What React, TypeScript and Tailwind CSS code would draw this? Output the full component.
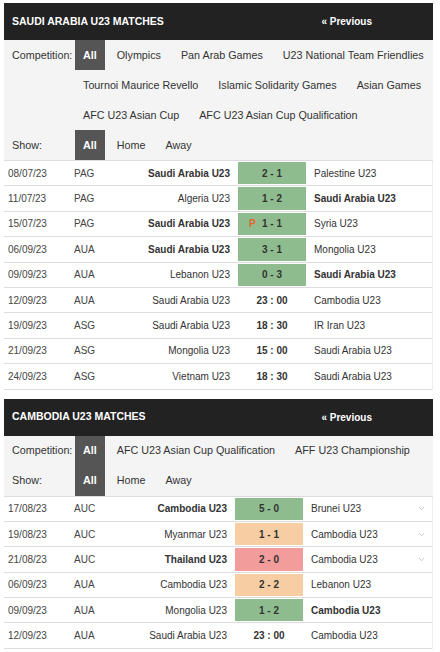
import React from 'react';
import { ChevronDown } from 'lucide-react';

type Match = {
  date: string;
  comp: string;
  home: string;
  away: string;
  score: string;
  win?: 'home' | 'away';
  tone?: 'green' | 'orange' | 'red' | 'none';
  pen?: boolean;
};

const saudiMatches: Match[] = [
  { date: '08/07/23', comp: 'PAG', home: 'Saudi Arabia U23', away: 'Palestine U23', score: '2 - 1', win: 'home', tone: 'green' },
  { date: '11/07/23', comp: 'PAG', home: 'Algeria U23', away: 'Saudi Arabia U23', score: '1 - 2', win: 'away', tone: 'green' },
  { date: '15/07/23', comp: 'PAG', home: 'Saudi Arabia U23', away: 'Syria U23', score: '1 - 1', win: 'home', tone: 'green', pen: true },
  { date: '06/09/23', comp: 'AUA', home: 'Saudi Arabia U23', away: 'Mongolia U23', score: '3 - 1', win: 'home', tone: 'green' },
  { date: '09/09/23', comp: 'AUA', home: 'Lebanon U23', away: 'Saudi Arabia U23', score: '0 - 3', win: 'away', tone: 'green' },
  { date: '12/09/23', comp: 'AUA', home: 'Saudi Arabia U23', away: 'Cambodia U23', score: '23 : 00', tone: 'none' },
  { date: '19/09/23', comp: 'ASG', home: 'Saudi Arabia U23', away: 'IR Iran U23', score: '18 : 30', tone: 'none' },
  { date: '21/09/23', comp: 'ASG', home: 'Mongolia U23', away: 'Saudi Arabia U23', score: '15 : 00', tone: 'none' },
  { date: '24/09/23', comp: 'ASG', home: 'Vietnam U23', away: 'Saudi Arabia U23', score: '18 : 30', tone: 'none' },
];

const cambodiaMatches: Match[] = [
  { date: '17/08/23', comp: 'AUC', home: 'Cambodia U23', away: 'Brunei U23', score: '5 - 0', win: 'home', tone: 'green' },
  { date: '19/08/23', comp: 'AUC', home: 'Myanmar U23', away: 'Cambodia U23', score: '1 - 1', tone: 'orange' },
  { date: '21/08/23', comp: 'AUC', home: 'Thailand U23', away: 'Cambodia U23', score: '2 - 0', win: 'home', tone: 'red' },
  { date: '06/09/23', comp: 'AUA', home: 'Cambodia U23', away: 'Lebanon U23', score: '2 - 2', tone: 'orange' },
  { date: '09/09/23', comp: 'AUA', home: 'Mongolia U23', away: 'Cambodia U23', score: '1 - 2', win: 'away', tone: 'green' },
  { date: '12/09/23', comp: 'AUA', home: 'Saudi Arabia U23', away: 'Cambodia U23', score: '23 : 00', tone: 'none' },
];

const toneClass = {
  green: 'bg-[#8fbc8f]',
  orange: 'bg-[#f7cea4]',
  red: 'bg-[#f29c9c]',
  none: '',
};

function FilterRow({ label, rows }: { label?: string; rows: string[][] }) {
  return (
    <div className="flex">
      <div className="w-[71px] shrink-0 pl-[8px] h-[30px] flex items-center">{label}</div>
      <div className="flex flex-col min-w-0">
        {rows.map((items, ri) => (
          <div key={ri} className="flex h-[30px] gap-x-[4px]">
            {items.map((it) => (
              <span
                key={it}
                className={
                  it === 'All' && ri === 0
                    ? 'shrink-0 whitespace-nowrap px-[8px] flex items-center bg-[#555555] text-white font-bold'
                    : 'shrink-0 whitespace-nowrap px-[8px] flex items-center'
                }
              >
                {it}
              </span>
            ))}
          </div>
        ))}
      </div>
    </div>
  );
}

function Section({
  title,
  comps,
  matches,
  chevron,
}: {
  title: string;
  comps: string[][];
  matches: Match[];
  chevron?: boolean;
}) {
  const cols = chevron
    ? 'grid-cols-[66px_70px_93px_72px_1fr_22px]'
    : 'grid-cols-[66px_70px_96px_72px_1fr]';
  return (
    <div className="ml-[4px] w-[429px]">
      <div className="h-[37px] bg-[#222222] text-white font-bold flex items-center justify-between pl-[8px] pr-[61px]">
        <span className="text-[10.5px]">{title}</span>
        <span className="text-[10px]">« Previous</span>
      </div>
      <div className="bg-[#f4f4f4] text-[10.75px] text-[#333333] border-b border-[#dddddd] overflow-hidden">
        <FilterRow label="Competition:" rows={comps} />
        <FilterRow label="Show:" rows={[['All', 'Home', 'Away']]} />
      </div>
      <div className="text-[10px] text-[#333333] border-r border-[#eeeeee]">
        {matches.map((m, i) => (
          <div key={i} className={`grid ${cols} h-[25.4px] border-b border-[#dddddd] items-stretch`}>
            <div className="pl-[4px] flex items-center text-[#444444]">{m.date}</div>
            <div className="pl-[4px] flex items-center text-[#444444]">{m.comp}</div>
            <div className={`pr-[6px] flex items-center justify-end whitespace-nowrap ${m.win === 'home' ? 'font-bold' : ''}`}>
              {m.home}
            </div>
            <div className="px-[2px] py-[1px]">
              <div className={`relative h-full flex items-center justify-center font-bold ${toneClass[m.tone ?? 'none']}`}>
                {m.pen && <span className="absolute left-[11px] text-[#e0662e]">P</span>}
                {m.score}
              </div>
            </div>
            <div className={`pl-[6px] flex items-center whitespace-nowrap ${m.win === 'away' ? 'font-bold' : ''}`}>
              {m.away}
            </div>
            {chevron && (
              <div className="flex items-center justify-center text-[#999999]">
                {i < 3 && <ChevronDown size={9} strokeWidth={1.5} />}
              </div>
            )}
          </div>
        ))}
      </div>
    </div>
  );
}

export default function App() {
  return (
    <div className="w-[440px] h-[652px] bg-white pt-[3px] font-['Liberation_Sans',Arial,sans-serif] overflow-hidden">
      <Section
        title="SAUDI ARABIA U23 MATCHES"
        comps={[
          ['All', 'Olympics', 'Pan Arab Games', 'U23 National Team Friendlies'],
          ['Tournoi Maurice Revello', 'Islamic Solidarity Games', 'Asian Games'],
          ['AFC U23 Asian Cup', 'AFC U23 Asian Cup Qualification'],
        ]}
        matches={saudiMatches}
      />
      <div className="h-[9px]" />
      <Section
        title="CAMBODIA U23 MATCHES"
        comps={[['All', 'AFC U23 Asian Cup Qualification', 'AFF U23 Championship']]}
        matches={cambodiaMatches}
        chevron
      />
    </div>
  );
}
